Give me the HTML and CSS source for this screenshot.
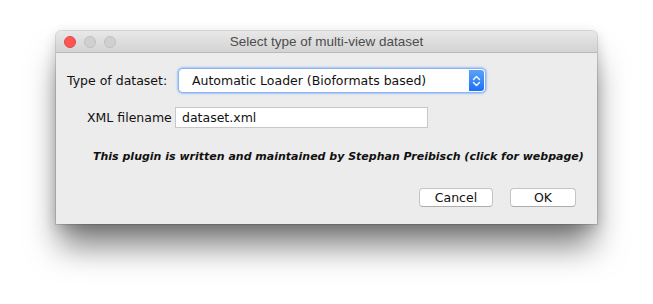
FILE: index.html
```html
<!DOCTYPE html>
<html>
<head>
<meta charset="utf-8">
<link rel="stylesheet" href="styles.css">
</head>
<body>
<div class="window">
  <div class="titlebar">
    <div class="lights">
      <span class="light red"></span>
      <span class="light grey"></span>
      <span class="light grey"></span>
    </div>
    <div class="title">Select type of multi-view dataset</div>
  </div>
  <div class="content">
    <div class="row row-type">
      <span class="label label-type">Type of dataset:</span>
      <div class="select">
        <span class="select-text">Automatic Loader (Bioformats based)</span>
        <span class="select-arrow">
          <svg width="9" height="14" viewBox="0 0 9 14"><path d="M1.5 5.5 L4.5 2.5 L7.5 5.5 M1.5 8.5 L4.5 11.5 L7.5 8.5" fill="none" stroke="#fff" stroke-width="1.4" stroke-linecap="round" stroke-linejoin="round"/></svg>
        </span>
      </div>
    </div>
    <div class="row row-xml">
      <span class="label label-xml">XML filename</span>
      <div class="field">dataset.xml</div>
    </div>
    <div class="note">This plugin is written and maintained by Stephan Preibisch (click for webpage)</div>
    <div class="buttons">
      <button class="btn btn-cancel">Cancel</button>
      <button class="btn btn-ok">OK</button>
    </div>
  </div>
</div>
</body>
</html>
```
FILE: styles.css
```css
html, body {
  margin: 0;
  padding: 0;
  background: #ffffff;
}
body {
  font-family: "DejaVu Sans", "Liberation Sans", sans-serif;
  padding-top: 31px;
  padding-left: 56px;
  height: 304px;
  box-sizing: border-box;
  overflow: hidden;
}
.window {
  width: 541px;
  height: 193px;
  border-radius: 5px 5px 0 0;
  background: #ececec;
  box-shadow: 0 0 0 1px rgba(0,0,0,0.12), 0 26px 32px -4px rgba(0,0,0,0.5), 0 4px 14px rgba(0,0,0,0.18);
  overflow: hidden;
  display: flex;
  flex-direction: column;
}
.titlebar {
  height: 21px;
  flex: none;
  background: linear-gradient(#e8e8e8, #d3d3d3);
  border-bottom: 1px solid #b9b9b9;
  display: flex;
  align-items: center;
  position: relative;
}
.lights {
  display: flex;
  gap: 8px;
  padding-left: 8px;
}
.light {
  width: 12px;
  height: 12px;
  border-radius: 50%;
  box-sizing: border-box;
}
.red {
  background: #fc5753;
  border: 1px solid #df4744;
}
.grey {
  background: #d0d0d0;
  border: 1px solid #c0c0c0;
}
.title {
  position: absolute;
  left: 0;
  right: 0;
  top: 0;
  line-height: 22px;
  text-align: center;
  font-family: "Liberation Sans", sans-serif;
  font-size: 13.5px;
  color: #4d4d4d;
}
.content {
  flex: 1;
  display: flex;
  flex-direction: column;
}
.row {
  display: flex;
  align-items: center;
}
.label {
  font-size: 12.5px;
  color: #111;
}
.row-type {
  margin-top: 16px;
  padding-left: 11px;
}
.label-type {
  width: 112px;
}
.select {
  width: 306px;
  height: 23px;
  box-sizing: border-box;
  background: #fff;
  border-radius: 4px;
  box-shadow: 0 0 0 1px #8db4ef, 0 0 2px 2px #a3c4f6;
  display: flex;
  align-items: center;
  justify-content: space-between;
  overflow: hidden;
}
.select-text {
  padding-left: 13px;
  font-size: 12.5px;
  color: #111;
}
.select-arrow {
  width: 15px;
  height: 21px;
  margin-right: 1px;
  background: linear-gradient(#5aa3fb, #1a6ff5);
  border-radius: 0 3px 3px 0;
  display: flex;
  align-items: center;
  justify-content: center;
}
.row-xml {
  margin-top: 15px;
  padding-left: 31px;
}
.label-xml {
  width: 88px;
}
.field {
  width: 253px;
  height: 21px;
  box-sizing: border-box;
  background: #fff;
  border: 1px solid #c8c8c8;
  padding-left: 6px;
  font-size: 12.5px;
  line-height: 19px;
  color: #111;
}
.note {
  margin-top: 22px;
  padding-left: 37px;
  font-size: 11px;
  font-weight: bold;
  font-style: italic;
  color: #111;
  line-height: 14px;
}
.buttons {
  display: flex;
  justify-content: flex-end;
  gap: 17px;
  margin-top: 24px;
  padding-right: 21px;
}
.btn {
  height: 19px;
  box-sizing: border-box;
  background: #fff;
  border: 1px solid #c4c4c4;
  border-bottom-color: #adadad;
  border-radius: 4px;
  font-family: "DejaVu Sans", sans-serif;
  font-size: 12.5px;
  color: #111;
  padding: 0;
  line-height: 17px;
}
.btn-cancel {
  width: 74px;
}
.btn-ok {
  width: 66px;
}
```
